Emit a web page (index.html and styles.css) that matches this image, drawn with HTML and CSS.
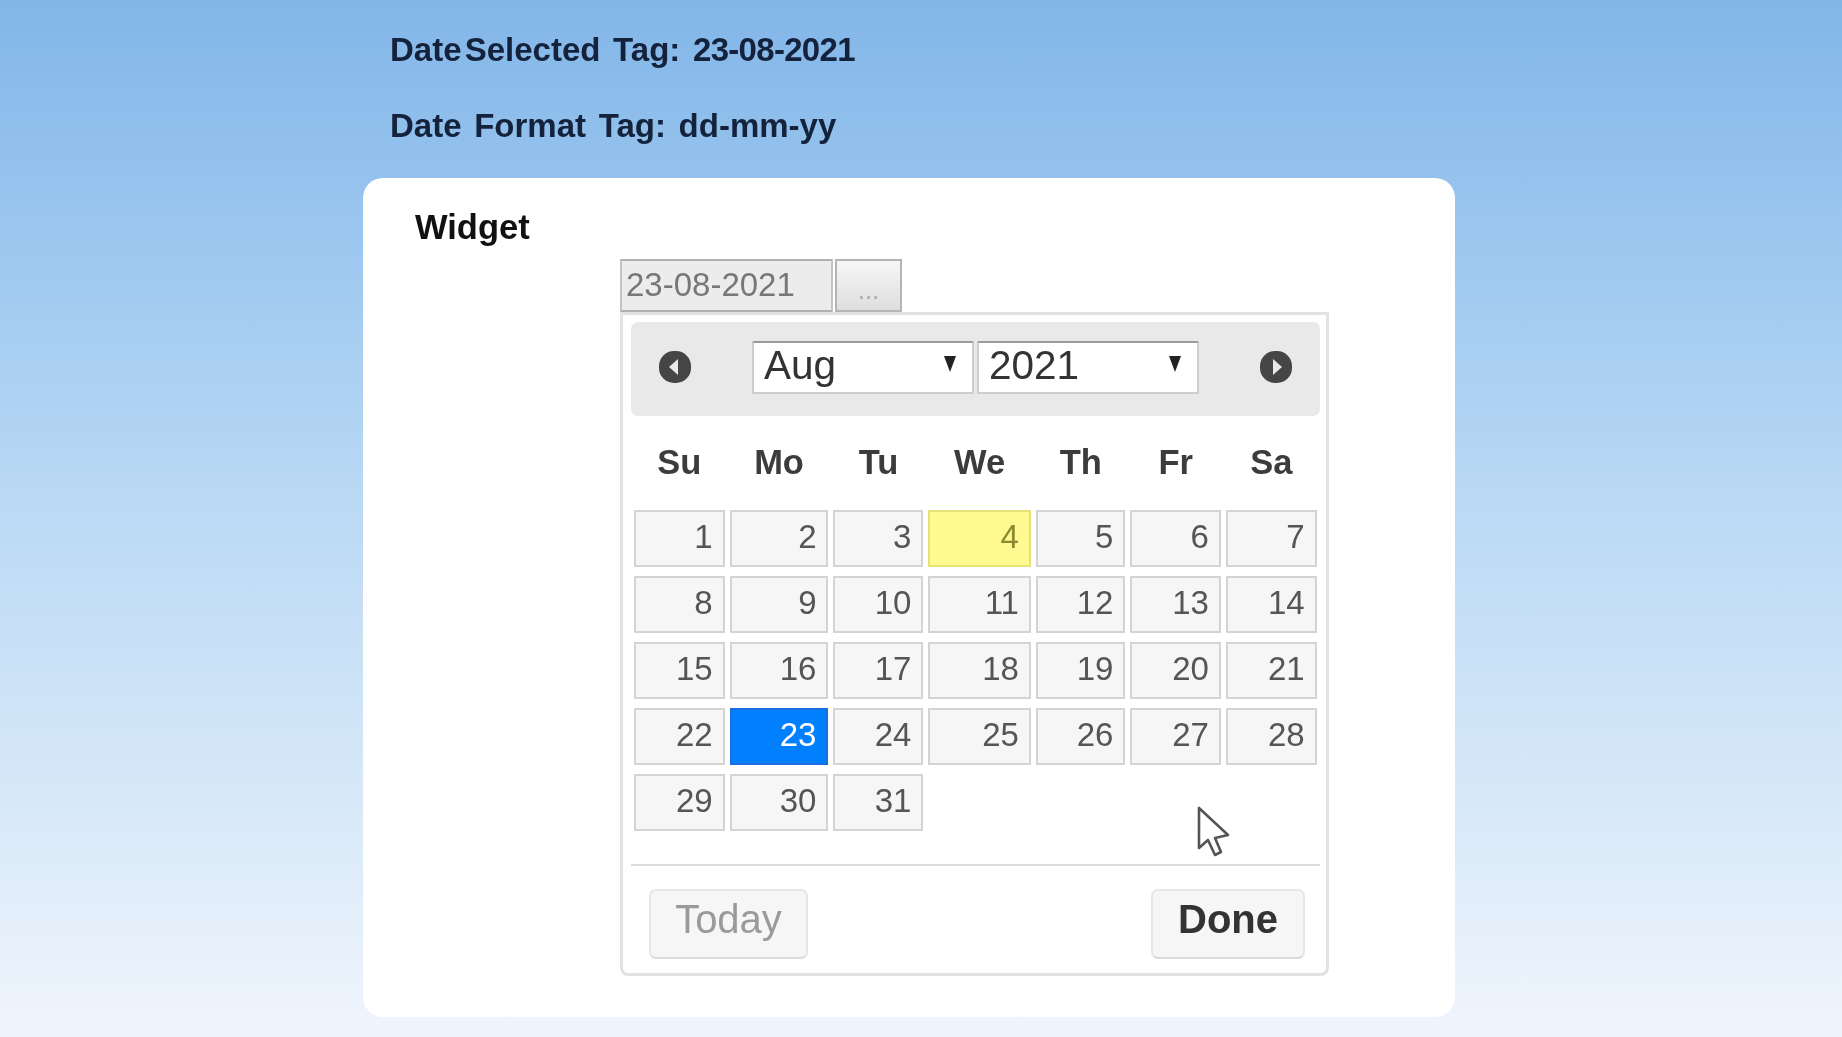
FILE: index.html
```html
<!DOCTYPE html>
<html lang="en">
<head>
  <meta charset="UTF-8" />
  <title>Date Widget</title>
  <link rel="stylesheet" href="styles.css">
</head>
<body>
  <!-- Values bound to the widget -->
  <div class="tags">
    <p><span class="tight">Date Selected</span> Tag: <span class="narrow">23-08-2021</span></p>
    <p>Date Format Tag: dd-mm-yy</p>
  </div>

  <!-- Widget card -->
  <div class="card">
    <h2>Widget</h2>
    <div class="date-field">
      <div class="date-input">23-08-2021</div>
      <div class="date-button">...</div>
    </div>

    <!-- Datepicker popup -->
    <div class="datepicker">
      <div class="dp-header">
        <svg class="dp-nav" viewBox="0 0 32 32"><rect width="32" height="32" rx="15" fill="#454545"/><polygon points="19,8 19,24 10,16" fill="#e9e9e9"/></svg>
        <div class="dp-selects">
          <div class="dp-select">Aug<svg viewBox="0 0 14 18"><polygon points="1,1 13,1 7,17" fill="#222"/></svg></div>
          <div class="dp-select">2021<svg viewBox="0 0 14 18"><polygon points="1,1 13,1 7,17" fill="#222"/></svg></div>
        </div>
        <svg class="dp-nav" viewBox="0 0 32 32"><rect width="32" height="32" rx="15" fill="#454545"/><polygon points="13,8 13,24 22,16" fill="#e9e9e9"/></svg>
      </div>

      <div class="dp-grid">
        <div class="dow">Su</div><div class="dow">Mo</div><div class="dow">Tu</div><div class="dow">We</div><div class="dow">Th</div><div class="dow">Fr</div><div class="dow">Sa</div>
        <div class="day">1</div><div class="day">2</div><div class="day">3</div><div class="day today">4</div><div class="day">5</div><div class="day">6</div><div class="day">7</div>
        <div class="day">8</div><div class="day">9</div><div class="day">10</div><div class="day">11</div><div class="day">12</div><div class="day">13</div><div class="day">14</div>
        <div class="day">15</div><div class="day">16</div><div class="day">17</div><div class="day">18</div><div class="day">19</div><div class="day">20</div><div class="day">21</div>
        <div class="day">22</div><div class="day active">23</div><div class="day">24</div><div class="day">25</div><div class="day">26</div><div class="day">27</div><div class="day">28</div>
        <div class="day">29</div><div class="day">30</div><div class="day">31</div>
      </div>

      <div class="dp-footer">
        <div class="dp-btn today-btn">Today</div>
        <div class="dp-btn done-btn">Done</div>
      </div>
    </div>
  </div>

  <!-- Mouse pointer caught in the capture -->
  <svg class="pointer" viewBox="0 0 33 51"><path d="M2 2 L2 42 L11 34 L18 49 L24 46 L18 32 L31 29 Z" fill="#fff" stroke="#555" stroke-width="2.6" stroke-linejoin="round"/></svg>
</body>
</html>
```

FILE: styles.css
```css
/* Reset and Base Styles */
* {
  margin: 0;
  padding: 0;
  box-sizing: border-box;
}
html, body {
  height: 1037px;
  overflow: hidden;
}
body {
  font-family: "Liberation Sans", Arial, sans-serif;
  background: linear-gradient(to bottom, #82b6e8 0%, #9fc9f0 26%, #bcdaf5 50%, #d8e9f8 78%, #f0f5fd 100%);
  position: relative;
  filter: blur(0.7px);
}

/* Tags above the card */
.tags {
  padding: 31px 0 0 390px;
}
.tags p {
  font-size: 33px;
  line-height: 38px;
  font-weight: bold;
  color: #14223c;
  margin-bottom: 38px;
  word-spacing: 3.5px;
}
.tight {
  word-spacing: -6px;
}
.narrow {
  letter-spacing: -0.7px;
}

/* Widget Card */
.card {
  width: 1092px;
  height: 839px;
  margin: -5px 0 0 363px;
  padding-top: 30px;
  background-color: #fff;
  border-radius: 20px;
}
.card h2 {
  font-size: 34.5px;
  line-height: 38px;
  color: #111;
  margin: 0 0 13px 52px;
}

/* Date input and trigger */
.date-field {
  display: flex;
  gap: 2px;
  height: 53px;
  margin-left: 257px;
}
.date-input {
  width: 213px;
  padding: 0 0 4px 4px;
  font-size: 33px;
  line-height: 48px;
  color: #777;
  background-color: #ececec;
  border: 2.5px solid #c4c4c4;
  border-top-color: #b0b0b0;
  border-bottom-color: #b0b0b0;
}
.date-button {
  width: 67px;
  padding-top: 5px;
  font-size: 26px;
  line-height: 48px;
  color: #aaa;
  text-align: center;
  background: linear-gradient(to bottom, #f6f6f6, #dedede);
  border: 2.5px solid #b4b4b4;
}

/* Datepicker Popup */
.datepicker {
  width: 709px;
  height: 664px;
  margin-left: 257px;
  padding: 7px 6px 0 8px;
  border: 3px solid #e2e2e2;
  border-radius: 0 0 8px 8px;
}
.dp-header {
  display: flex;
  align-items: center;
  justify-content: space-between;
  height: 94px;
  padding: 0 28px 4px;
  background-color: #e9e9e9;
  border-radius: 7px;
}
.dp-nav {
  width: 32px;
  height: 32px;
}
.dp-selects {
  display: flex;
  gap: 3px;
}
.dp-select {
  display: flex;
  align-items: center;
  justify-content: space-between;
  width: 222px;
  height: 53px;
  padding: 0 15px 4px 10px;
  font-size: 40.5px;
  color: #333;
  background-color: #fff;
  border: 2px solid #cdcdcd;
  border-top-color: #9a9a9a;
  border-radius: 2px;
}
.dp-select svg {
  width: 14px;
  height: 18px;
  margin-top: -2px;
}

/* Day Grid */
.dp-grid {
  display: grid;
  grid-template-columns: 90.6px 98.9px 89.9px 102.6px 89.5px 90.5px 90.7px;
  column-gap: 5px;
  row-gap: 9px;
  margin: 27px 3px 0;
}
.dow {
  font-size: 34.5px;
  line-height: 38px;
  font-weight: bold;
  color: #3c3c3c;
  text-align: center;
  margin-bottom: 20px;
}
.day {
  height: 57px;
  padding-right: 10px;
  font-size: 33px;
  line-height: 50px;
  color: #555;
  text-align: right;
  background-color: #f6f6f6;
  border: 2.5px solid #d4d4d4;
}
.day.today {
  color: #8a8a30;
  background-color: #fffa90;
  border-color: #e6e27a;
}
.day.active {
  color: #fff;
  background-color: #007fff;
  border-color: #1a6fe0;
}

/* Footer Buttons */
.dp-footer {
  display: flex;
  justify-content: space-between;
  position: absolute;
  left: 631px;
  top: 864px;
  width: 689px;
  padding: 23px 15px 0 18px;
  border-top: 2.5px solid #dcdcdc;
}
.dp-btn {
  height: 70px;
  padding-bottom: 12px;
  line-height: 56px;
  text-align: center;
  background-color: #f6f6f6;
  border: 2.5px solid #e6e6e6;
  border-bottom-color: #dadada;
  border-radius: 7px;
}
.today-btn {
  width: 159px;
  font-size: 40px;
  color: #9a9a9a;
}
.done-btn {
  width: 154px;
  font-size: 40px;
  font-weight: bold;
  color: #333;
}

/* Mouse pointer */
.pointer {
  position: absolute;
  left: 1197px;
  top: 806px;
  width: 33px;
  height: 51px;
}
```
